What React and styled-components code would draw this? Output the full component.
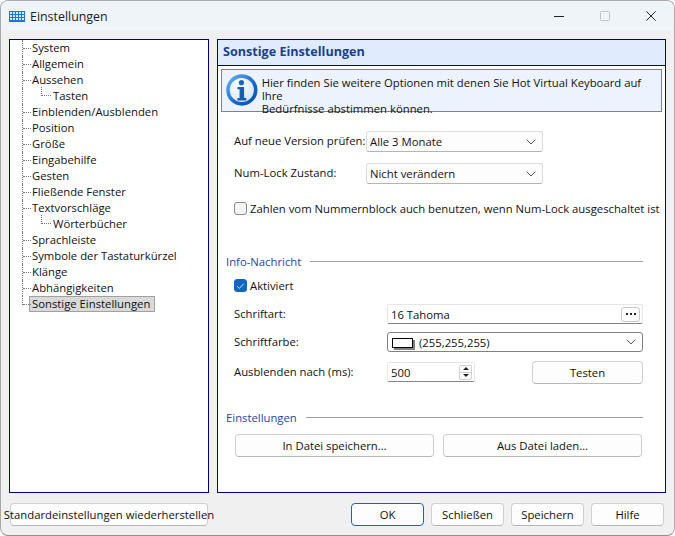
import React from "react";
import styled, { createGlobalStyle } from "styled-components";

const Global = createGlobalStyle`
  html, body { margin: 0; padding: 0; background: #fff; }
  * { box-sizing: border-box; }
`;

const Win = styled.div`
  width: 675px; height: 536px; background: #f0f0f0;
  border: 1px solid #a9a9a9; border-bottom-color:#8f8f8f; border-radius: 8px; overflow: hidden;
  font: 11.3px "Open Sans", sans-serif; color: #111;
  display: flex; flex-direction: column;
`;
const TitleBar = styled.div`
  height: 30px; background: #eff4f9; display: flex; align-items: center; padding-left: 8px; flex: none;
`;
const TitleText = styled.span`font-size: 12.4px; margin-left: 5px; color: #1a1a1a; flex: 1;`;
const WinBtn = styled.span`width: 46px; height: 30px; display: flex; align-items: center; justify-content: center; margin-left: ${p => p.$ml || 0}px;`;
const Main = styled.div`display: flex; gap: 8px; margin: 8px 0 0 8px; flex: none;`;
const Tree = styled.div`
  width: 200px; height: 454px; background: #fff; border: 1px solid #000080; padding-top: 0px;
`;
const Item = styled.div`display: flex; height: 16px; padding-left: ${p => p.$child ? 12 : 12}px; align-items: stretch;`;
const Conn = styled.span`
  width: 9px; flex: none; border-left: 1px dotted ${p => p.$hide ? "transparent" : "#777"};
  height: ${p => p.$short ? "9px" : "auto"}; position: relative;
  &::after { content: ""; display: block; height: 8px; border-bottom: 1px dotted #777; }
`;
const Vert = styled.span`width: 19px; flex: none; border-left: 1px dotted #777;`;
const Conn2 = styled.span`
  width: 10px; flex: none; border-left: 1px dotted #777; height: 9px; margin-top: -1px;
  & { border-bottom: 1px dotted #777; }
`;
const Label = styled.span`
  padding: 0 4px 0 ${p => p.$sel ? 2 : 1}px; line-height: ${p => p.$sel ? 14 : 16}px; height: 16px; white-space: nowrap;
  ${p => p.$sel && "background:#d9d9d9;border:1px solid #a0a0a0;margin-left:-2px;padding-right:4px;"}
  ${p => p.$sub && "padding-left:2px;"}
`;
const Panel = styled.div`
  width: 449px; height: 454px; background: #fff; border: 1px solid #000080; display:flex; flex-direction:column;
`;
const Head = styled.div`
  height: 26px; background: #e0ecfd; border-bottom: 1px solid #000080; color: #1b3f8f;
  font-weight: 700; font-size: 12.6px; line-height: 24px; padding-left: 5px; flex:none;
`;
const Info = styled.div`
  margin: 3px 3px 0 3px; height: 43px; background: #ecf3fe; border: 1px solid #7f8388;
  display: flex; align-items: flex-start; padding: 4px 0 0 4px; gap: 4px; flex:none;
`;
const InfoText = styled.div`line-height: 13px; margin-top: 2px;`;
const Form = styled.div`padding: 19px 0 0 8px; flex: 1;`;
const Row = styled.div`
  display: flex; align-items: center; height: ${p => p.$h || 21}px; margin-top: ${p => p.$mt || 0}px; padding-left: ${p => p.$pl ?? 8}px;
`;
const RowLabel = styled.span`width: ${p => p.$w}px; flex: none; white-space: nowrap; margin-top:-2px;`;
const Select = styled.div`
  width: ${p => p.$w}px; height: ${p => p.$h || 21}px; background: ${p => p.$dark ? "#fff" : "#fdfdfd"};
  border: 1px solid ${p => p.$dark ? "#808080" : "#dcdcdc"}; ${p => !p.$dark && "border-bottom-color:#b4b4b4;"} border-radius: 3px; display: flex; align-items: center;
  padding: 0 6px 0 3px; justify-content: space-between;
`;
const Swatch = styled.span`
  display: inline-block; width: 21px; height: 10px; background: #fff; border: 1px solid #000; margin-right: 6px;
  box-shadow: 2px 2px 0 #808080; vertical-align: -1px; margin-left:1px;
`;
const TextInput = styled.div`
  width: ${p => p.$w}px; height: ${p => p.$h}px; background: #fff; border: 1px solid #e6e6e6; border-bottom: 1px solid #858585;
  border-radius: 2px; display: flex; align-items: center; justify-content: space-between; padding: 0 2px 0 3px;
`;
const Dots = styled.span`
  width: 19px; height: 15px; border: 1px solid #c8c8c8; border-radius: 3px; background: #fdfdfd;
  display: flex; align-items: center; justify-content: center; gap: 2px;
  & i { width: 2px; height: 2px; background: #222; display:block; }
`;
const Spin = styled.span`
  width: 13px; height: 15px; display:flex; flex-direction: column; border: 1px solid #d0d0d0; border-radius: 2px; background:#fff;
  & span { flex: 1; display:flex; align-items:center; justify-content:center; }
  & span + span { border-top: 1px solid #d0d0d0; }
`;
const CheckBox = styled.span`
  width: 13px; height: 13px; flex: none; border-radius: 3px; margin-right: 3px;
  background: ${p => p.$on ? "#0f67c0" : "#f5f5f5"};
  border: 1px solid ${p => p.$on ? "#0f67c0" : "#8a8a8a"};
  display: flex; align-items: center; justify-content: center;
`;
const Group = styled.div`
  display: flex; align-items: center; height: 14px; margin-top: ${p => p.$mt}px; color: #1c46a6; padding-right: 22px;
`;
const GroupLine = styled.span`flex: 1; height: 1px; background: #a0a0a0; margin-left: ${p => p.$ml}px;`;
const Btn = styled.div`
  width: ${p => p.$w}px; height: 23px; flex: none; background: #fdfdfd; border: 1px solid ${p => p.$primary ? "#0f67c0" : "#d0d0d0"};
  border-bottom-color: ${p => p.$primary ? "#0f67c0" : "#b8b8b8"};
  border-radius: 4px; display: flex; align-items: center; justify-content: center; white-space: nowrap; margin-left: ${p => p.$ml || 0}px;
`;
const Bottom = styled.div`display: flex; margin: 10px 0 0 9px;`;
const Spacer = styled.span`flex: none; width: ${p => p.$w}px;`;

const Chev = ({ c = "#555" }) => (
  <svg width="10" height="6" viewBox="0 0 10 6"><path d="M.7.7 5 5l4.3-4.3" fill="none" stroke={c} strokeWidth="1" /></svg>
);

const items = ["System","Allgemein","Aussehen",["Tasten"],"Einblenden/Ausblenden","Position","Größe","Eingabehilfe","Gesten","Fließende Fenster","Textvorschläge",["Wörterbücher"],"Sprachleiste","Symbole der Tastaturkürzel","Klänge","Abhängigkeiten"];

const KeyIcon = () => (
  <svg width="16" height="11" viewBox="0 0 16 11" shapeRendering="crispEdges">
    <rect width="16" height="11" fill="#1677e0" />
    {[0,1,2].flatMap(r => [0,1,2,3,4].map(c => (
      <rect key={r+"-"+c} x={1+c*3} y={1+r*3} width="2" height="2" fill="#d8ebff" />
    )))}
  </svg>
);
const InfoIcon = () => (
  <svg width="32" height="32" viewBox="0 0 32 32">
    <defs>
      <linearGradient id="g" x1="0" y1="0" x2="1" y2="1"><stop offset="0" stopColor="#6fb6f5"/><stop offset=".6" stopColor="#1266c8"/><stop offset="1" stopColor="#0b4ea6"/></linearGradient>
      <radialGradient id="w" cx=".4" cy=".35" r=".8"><stop offset="0" stopColor="#fff"/><stop offset="1" stopColor="#cfe2f6"/></radialGradient>
    </defs>
    <circle cx="16" cy="16" r="15.8" fill="url(#g)"/>
    <circle cx="16" cy="16" r="12.2" fill="url(#w)"/>
    <circle cx="15.6" cy="8.6" r="2.6" fill="#1a66b8"/>
    <path d="M11.5 13h6.8v11.2h2.2v2.3h-9v-2.3h2.2v-8.9h-2.2z" fill="#1a5fae"/>
  </svg>
);

export default function App() {
  return (
    <>
      <Global />
      <Win>
        <TitleBar>
          <KeyIcon />
          <TitleText>Einstellungen</TitleText>
          <WinBtn><svg width="10" height="1"><rect width="10" height="1" fill="#222"/></svg></WinBtn>
          <WinBtn><svg width="10" height="10"><rect x=".5" y=".5" width="9" height="9" rx="1" fill="none" stroke="#c4c4c4"/></svg></WinBtn>
          <WinBtn><svg width="10" height="10"><path d="M.3.3l9.4 9.4M9.7.3.3 9.7" stroke="#222" fill="none"/></svg></WinBtn>
        </TitleBar>
        <Main>
          <Tree>
            {items.map((t, i) => Array.isArray(t) ? (
              <Item key={i}><Vert /><Conn2 /><Label $sub>{t[0]}</Label></Item>
            ) : (
              <Item key={i}><Conn /><Label>{t}</Label></Item>
            ))}
            <Item><Conn $short /><Label $sel>Sonstige Einstellungen</Label></Item>
          </Tree>
          <Panel>
            <Head>Sonstige Einstellungen</Head>
            <Info>
              <InfoIcon />
              <InfoText>Hier finden Sie weitere Optionen mit denen Sie Hot Virtual Keyboard auf Ihre<br/>Bedürfnisse abstimmen können.</InfoText>
            </Info>
            <Form>
              <Row><RowLabel $w={132}>Auf neue Version prüfen:</RowLabel><Select $w={177}>Alle 3 Monate<Chev /></Select></Row>
              <Row $mt={11}><RowLabel $w={132}>Num-Lock Zustand:</RowLabel><Select $w={177}>Nicht verändern<Chev /></Select></Row>
              <Row $mt={17} $h={15}><CheckBox />Zahlen vom Nummernblock auch benutzen, wenn Num-Lock ausgeschaltet ist</Row>
              <Group $mt={38}>Info-Nachricht<GroupLine $ml={9} /></Group>
              <Row $mt={10} $h={15}><CheckBox $on><svg width="9" height="8" viewBox="0 0 9 8"><path d="M1.2 4.2 3.4 6.4 7.8 1.6" fill="none" stroke="#cfe4fa" strokeWidth="1"/></svg></CheckBox>Aktiviert</Row>
              <Row $mt={11} $h={20}><RowLabel $w={153}>Schriftart:</RowLabel><TextInput $w={256} $h={20}>16 Tahoma<Dots><i/><i/><i/></Dots></TextInput></Row>
              <Row $mt={8} $h={20}><RowLabel $w={153}>Schriftfarbe:</RowLabel><Select $dark $w={256} $h={20}><span><Swatch />(255,255,255)</span><Chev /></Select></Row>
              <Row $mt={8} $h={24}>
                <RowLabel $w={153}>Ausblenden nach (ms):</RowLabel>
                <TextInput $w={88} $h={20}>500<Spin>
                  <span><svg width="6" height="3"><path d="M3 0l3 3H0z" fill="#222"/></svg></span>
                  <span><svg width="6" height="3"><path d="M0 0h6L3 3z" fill="#222"/></svg></span>
                </Spin></TextInput>
                <Spacer $w={57} />
                <Btn $w={111}>Testen</Btn>
              </Row>
              <Group $mt={26}>Einstellungen<GroupLine $ml={9} /></Group>
              <Row $mt={10} $h={23} $pl={9}><Btn $w={199}>In Datei speichern…</Btn><Btn $w={199} $ml={9}>Aus Datei laden…</Btn></Row>
            </Form>
          </Panel>
        </Main>
        <Bottom>
          <Btn $w={198}>Standardeinstellungen wiederherstellen</Btn>
          <Spacer $w={143} />
          <Btn $w={73} $primary>OK</Btn>
          <Btn $w={73} $ml={7}>Schließen</Btn>
          <Btn $w={73} $ml={7}>Speichern</Btn>
          <Btn $w={73} $ml={7}>Hilfe</Btn>
        </Bottom>
      </Win>
    </>
  );
}
